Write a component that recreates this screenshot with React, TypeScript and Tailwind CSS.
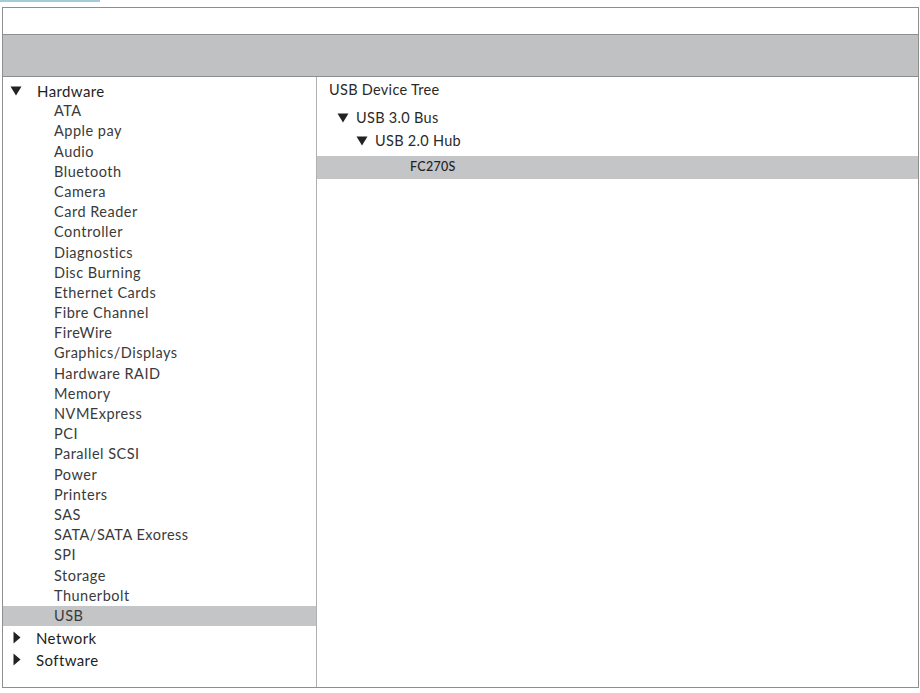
import React from "react";

const items = [
  "ATA",
  "Apple pay",
  "Audio",
  "Bluetooth",
  "Camera",
  "Card Reader",
  "Controller",
  "Diagnostics",
  "Disc Burning",
  "Ethernet Cards",
  "Fibre Channel",
  "FireWire",
  "Graphics/Displays",
  "Hardware RAID",
  "Memory",
  "NVMExpress",
  "PCI",
  "Parallel SCSI",
  "Power",
  "Printers",
  "SAS",
  "SATA/SATA Exoress",
  "SPI",
  "Storage",
  "Thunerbolt",
  "USB",
];

function Down({ className }: { className?: string }) {
  return (
    <svg className={className} width="12" height="10" viewBox="0 0 12 10">
      <path d="M0.5 0.5 L11.5 0.5 L6 9.5 Z" fill="#222" />
    </svg>
  );
}

function Right({ className }: { className?: string }) {
  return (
    <svg className={className} width="8" height="13" viewBox="0 0 8 13">
      <path d="M0.5 0.5 L7.5 6.5 L0.5 12.5 Z" fill="#222" />
    </svg>
  );
}

export default function App() {
  return (
    <div
      className="w-[920px] h-[693px] bg-white overflow-hidden"
      style={{ fontFamily: "Lato, 'Noto Sans', sans-serif" }}
    >
      <div className="h-[2px] w-[100px] bg-[#a3cadb]" />
      <div className="mt-[5px] ml-[2px] w-[917px] h-[681px] border border-[#8e8e8e] flex flex-col">
        <div className="h-[27px] bg-white border-b border-[#8e8e8e]" />
        <div className="h-[42px] bg-[#bfc1c3] border-b border-[#8e8e8e]" />
        <div className="flex flex-1 min-h-0">
          <div className="w-[314px] border-r border-[#b0b0b0] pt-[4px] text-[14.5px] tracking-[0.5px]">
            <div className="h-[20px] flex items-center">
              <Down className="ml-[7px]" />
              <span className="ml-[15px] text-[#1e1e1e] text-[15px] tracking-[0.4px]">Hardware</span>
            </div>
            {items.map((t) => (
              <div
                key={t}
                className={`h-[20.2px] flex items-center pl-[51px] text-[#3a3a3a] ${
                  t === "USB" ? "bg-[#c4c5c7]" : ""
                }`}
              >
                {t}
              </div>
            ))}
            <div className="mt-[1px] h-[22px] flex items-center">
              <Right className="ml-[10px]" />
              <span className="ml-[15px] text-[#1e1e1e] text-[15px] tracking-[0.4px]">Network</span>
            </div>
            <div className="h-[22px] flex items-center">
              <Right className="ml-[10px]" />
              <span className="ml-[15px] text-[#1e1e1e] text-[15px] tracking-[0.4px]">Software</span>
            </div>
          </div>
          <div className="flex-1 pt-[3px] text-[14.5px] tracking-[0.3px] text-[#2a2a2a]">
            <div className="h-[20px] flex items-center pl-[12px]">USB Device Tree</div>
            <div className="h-[24px] mt-[6px] flex items-center pl-[20px]">
              <Down />
              <span className="ml-[7px]">USB 3.0 Bus</span>
            </div>
            <div className="h-[22px] flex items-center pl-[39px]">
              <Down />
              <span className="ml-[7px]">USB 2.0 Hub</span>
            </div>
            <div className="mt-[4px] h-[23px] bg-[#c4c5c7] flex items-center pl-[93px] text-[12.5px] font-medium text-[#222]">
              FC270S
            </div>
          </div>
        </div>
      </div>
    </div>
  );
}
